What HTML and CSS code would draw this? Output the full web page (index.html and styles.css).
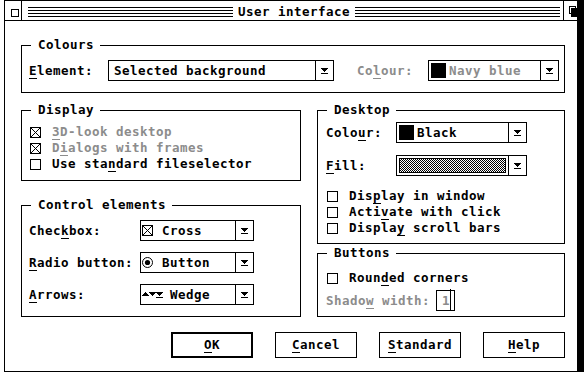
FILE: index.html
```html
<!DOCTYPE html>
<html lang="en">
<head>
<meta charset="utf-8">
<title>User interface</title>
<link rel="stylesheet" href="styles.css">
</head>
<body>
<div class="window">
  <div class="titlebar">
    <div class="closer"><span class="closer-box"></span></div>
    <div class="stripes"><span class="title">User interface</span></div>
    <div class="fuller">
      <svg width="9" height="11" viewBox="0 0 9 11" shape-rendering="crispEdges"><rect x="0.5" y="0.5" width="6" height="7" fill="#fff" stroke="#000"/><rect x="2" y="2" width="7" height="9" fill="#000"/></svg>
    </div>
  </div>

  <div class="content">
    <div class="group colours">
      <span class="legend">Colours</span>
      <div class="row">
        <span class="label w-element"><u>E</u>lement:</span>
        <div class="popup p-element">
          <span class="popup-value">Selected background</span>
          <span class="popup-arrow"><svg width="7" height="6" viewBox="0 0 7 6" shape-rendering="crispEdges"><path d="M0 0h7v1H6v1H5v1H4v1H3V3H2V2H1V1H0z"/><rect y="5" width="7" height="1"/></svg></span>
        </div>
        <span class="label w-colour disabled">Co<u>l</u>our:</span>
        <div class="popup p-small p-swatch">
          <span class="popup-value"><span class="swatch"></span><span class="disabled">Navy blue</span></span>
          <span class="popup-arrow"><svg width="7" height="6" viewBox="0 0 7 6" shape-rendering="crispEdges"><path d="M0 0h7v1H6v1H5v1H4v1H3V3H2V2H1V1H0z"/><rect y="5" width="7" height="1"/></svg></span>
        </div>
      </div>
    </div>

    <div class="columns">
      <div class="col col-left">
        <div class="group display">
          <span class="legend">Display</span>
          <div class="check">
            <svg class="cb" width="11" height="11" viewBox="0 0 11 11" shape-rendering="crispEdges"><rect x="0.5" y="0.5" width="10" height="10" fill="#fff" stroke="#000"/><path d="M1 1L10 10M10 1L1 10" stroke="#000"/></svg>
            <span class="disabled"><u>3</u>D-look desktop</span>
          </div>
          <div class="check">
            <svg class="cb" width="11" height="11" viewBox="0 0 11 11" shape-rendering="crispEdges"><rect x="0.5" y="0.5" width="10" height="10" fill="#fff" stroke="#000"/><path d="M1 1L10 10M10 1L1 10" stroke="#000"/></svg>
            <span class="disabled">D<u>i</u>alogs with frames</span>
          </div>
          <div class="check">
            <svg class="cb" width="11" height="11" viewBox="0 0 11 11" shape-rendering="crispEdges"><rect x="0.5" y="0.5" width="10" height="10" fill="#fff" stroke="#000"/></svg>
            <span>Use sta<u>n</u>dard fileselector</span>
          </div>
        </div>

        <div class="group controls">
          <span class="legend">Control elements</span>
          <div class="row">
            <span class="label w-ctrl">Chec<u>k</u>box:</span>
            <div class="popup p-ctrl">
              <span class="popup-value"><svg class="glyph" width="11" height="11" viewBox="0 0 11 11" shape-rendering="crispEdges"><rect x="0.5" y="0.5" width="10" height="10" fill="#fff" stroke="#000"/><path d="M1 1L10 10M10 1L1 10" stroke="#000"/></svg>Cross</span>
              <span class="popup-arrow"><svg width="7" height="6" viewBox="0 0 7 6" shape-rendering="crispEdges"><path d="M0 0h7v1H6v1H5v1H4v1H3V3H2V2H1V1H0z"/><rect y="5" width="7" height="1"/></svg></span>
            </div>
          </div>
          <div class="row">
            <span class="label w-ctrl"><u>R</u>adio button:</span>
            <div class="popup p-ctrl">
              <span class="popup-value"><svg class="glyph" width="11" height="11" viewBox="0 0 11 11"><circle cx="5.5" cy="5.5" r="5" fill="#fff" stroke="#000"/><circle cx="5.5" cy="5.5" r="2.6" fill="#000"/></svg>Button</span>
              <span class="popup-arrow"><svg width="7" height="6" viewBox="0 0 7 6" shape-rendering="crispEdges"><path d="M0 0h7v1H6v1H5v1H4v1H3V3H2V2H1V1H0z"/><rect y="5" width="7" height="1"/></svg></span>
            </div>
          </div>
          <div class="row">
            <span class="label w-ctrl"><u>A</u>rrows:</span>
            <div class="popup p-ctrl">
              <span class="popup-value"><svg class="glyph glyph-arrows" width="21" height="6" viewBox="0 0 21 6" shape-rendering="crispEdges"><path d="M3 0h1v1h1v1h1v1h1v1H0V3h1V2h1V1h1z"/><path d="M7 0h7v1h-1v1h-1v1h-1v1h-1V3H9V2H8V1H7z"/><path d="M14 0h7v1h-1v1h-1v1h-1v1h-1V3h-1V2h-1V1h-1z"/><rect x="14" y="5" width="7" height="1"/></svg>Wedge</span>
              <span class="popup-arrow"><svg width="7" height="6" viewBox="0 0 7 6" shape-rendering="crispEdges"><path d="M0 0h7v1H6v1H5v1H4v1H3V3H2V2H1V1H0z"/><rect y="5" width="7" height="1"/></svg></span>
            </div>
          </div>
        </div>
      </div>

      <div class="col col-right">
        <div class="group desktop">
          <span class="legend">Desktop</span>
          <div class="row">
            <span class="label w-desk">Colo<u>u</u>r:</span>
            <div class="popup p-small p-swatch">
              <span class="popup-value"><span class="swatch"></span>Black</span>
              <span class="popup-arrow"><svg width="7" height="6" viewBox="0 0 7 6" shape-rendering="crispEdges"><path d="M0 0h7v1H6v1H5v1H4v1H3V3H2V2H1V1H0z"/><rect y="5" width="7" height="1"/></svg></span>
            </div>
          </div>
          <div class="row row-gap">
            <span class="label w-desk"><u>F</u>ill:</span>
            <div class="popup p-small p-swatch">
              <span class="popup-value"><span class="pattern"></span></span>
              <span class="popup-arrow"><svg width="7" height="6" viewBox="0 0 7 6" shape-rendering="crispEdges"><path d="M0 0h7v1H6v1H5v1H4v1H3V3H2V2H1V1H0z"/><rect y="5" width="7" height="1"/></svg></span>
            </div>
          </div>
          <div class="checklist">
            <div class="check">
              <svg class="cb" width="11" height="11" viewBox="0 0 11 11" shape-rendering="crispEdges"><rect x="0.5" y="0.5" width="10" height="10" fill="#fff" stroke="#000"/></svg>
              <span>Dis<u>p</u>lay in window</span>
            </div>
            <div class="check">
              <svg class="cb" width="11" height="11" viewBox="0 0 11 11" shape-rendering="crispEdges"><rect x="0.5" y="0.5" width="10" height="10" fill="#fff" stroke="#000"/></svg>
              <span>Acti<u>v</u>ate with click</span>
            </div>
            <div class="check">
              <svg class="cb" width="11" height="11" viewBox="0 0 11 11" shape-rendering="crispEdges"><rect x="0.5" y="0.5" width="10" height="10" fill="#fff" stroke="#000"/></svg>
              <span>Displa<u>y</u> scroll bars</span>
            </div>
          </div>
        </div>

        <div class="group btngroup">
          <span class="legend">Buttons</span>
          <div class="check">
            <svg class="cb" width="11" height="11" viewBox="0 0 11 11" shape-rendering="crispEdges"><rect x="0.5" y="0.5" width="10" height="10" fill="#fff" stroke="#000"/></svg>
            <span>Roun<u>d</u>ed corners</span>
          </div>
          <div class="field-row">
            <span class="label w-shadow disabled">Shado<u>w</u> width:</span>
            <span class="field"><span class="disabled">1</span><span class="cursor"></span></span>
          </div>
        </div>
      </div>
    </div>

    <div class="actions">
      <button class="btn btn-default" type="button"><u>O</u>K</button>
      <button class="btn" type="button"><u>C</u>ancel</button>
      <button class="btn" type="button"><u>S</u>tandard</button>
      <button class="btn" type="button"><u>H</u>elp</button>
    </div>
  </div>
</div>
</body>
</html>
```

FILE: styles.css
```css
* {
  box-sizing: border-box;
}

html,
body {
  margin: 0;
  padding: 0;
  background: #fff;
}

body {
  font-family: "DejaVu Sans Mono", "Liberation Mono", monospace;
  font-weight: bold;
  font-size: 12.5px;
  letter-spacing: 0.47px;
  line-height: 16px;
  color: #000;
}

u {
  text-decoration: underline;
  text-decoration-thickness: 1px;
  text-underline-offset: 3px;
}

.disabled {
  color: #8c8c8c;
}

/* window frame */
.window {
  margin-left: 4px;
  width: 574px;
  height: 372px;
  border: 1px solid #000;
  background: #fff;
  box-shadow: 6px 0 0 #000, 1px 4px 0 #000, 6px 4px 0 #000;
  display: flex;
  flex-direction: column;
}

.titlebar {
  flex: none;
  display: flex;
  height: 20px;
  border-bottom: 1px solid #000;
}

.closer {
  flex: none;
  width: 17px;
  border-right: 1px solid #000;
}

.closer-box {
  display: block;
  width: 8px;
  height: 8px;
  margin: 8px 0 0 6px;
  border: 1px solid #000;
}

.stripes {
  flex: 1;
  height: 10px;
  margin: 6px 3px 0 6px;
  background: repeating-linear-gradient(to bottom, #000 0 1px, transparent 1px 3px);
  display: flex;
  justify-content: center;
  align-items: center;
}

.title {
  background: #fff;
  padding: 0 5px;
  line-height: 16px;
}

.fuller {
  flex: none;
  width: 14px;
  border-left: 1px solid #000;
  padding: 5px 0 0 5px;
}

.fuller svg {
  display: block;
}

/* content */
.content {
  flex: 1;
  padding: 24px 12px 0 16px;
}

.group {
  position: relative;
  border: 1px solid #000;
}

.legend {
  position: absolute;
  top: -9px;
  left: 9px;
  padding: 0 6px 0 7px;
  background: #fff;
  line-height: 16px;
}

.row {
  display: flex;
  align-items: center;
}

.row-gap {
  margin-top: 12px;
}

.label {
  flex: none;
  white-space: nowrap;
}

.w-element { width: 79px; }
.w-colour { width: 71px; margin-left: 23px; }
.w-desk { width: 70px; }
.w-ctrl { width: 111px; }
.w-shadow { width: 110px; }

.popup {
  flex: none;
  display: flex;
  height: 21px;
  border: 1px solid #000;
  background: #fff;
}

.popup-value {
  flex: 1;
  display: flex;
  align-items: center;
  padding-left: 5px;
  white-space: nowrap;
  overflow: hidden;
}

.popup-arrow {
  flex: none;
  width: 18px;
  border-left: 1px solid #000;
  display: flex;
  align-items: center;
  justify-content: center;
}

.popup-arrow svg {
  display: block;
}

.p-element { width: 226px; }
.p-small { width: 131px; }
.p-ctrl { width: 114px; }

.p-swatch .popup-value {
  padding-left: 2px;
}

.p-ctrl .popup-value {
  padding-left: 1px;
}

.swatch {
  flex: none;
  width: 15px;
  height: 15px;
  margin-right: 3px;
  background: #000;
}

.pattern {
  flex: none;
  width: 107px;
  height: 15px;
  border: 1px solid #000;
  background: repeating-conic-gradient(#000 0 25%, #fff 0 50%) 0 0 / 2px 2px;
}

.glyph {
  flex: none;
  display: block;
  margin-right: 9px;
}

.glyph-arrows {
  margin-right: 7px;
}

/* groups */
.colours {
  height: 48px;
  padding: 14px 0 0 7px;
}

.columns {
  display: flex;
  gap: 16px;
  margin-top: 17px;
}

.col {
  display: flex;
  flex-direction: column;
}

.col-left {
  width: 280px;
  gap: 24px;
}

.col-right {
  width: 248px;
  gap: 9px;
}

.display {
  height: 71px;
  padding: 13px 0 0 7px;
}

.controls {
  height: 112px;
  padding: 14px 0 0 7px;
  display: flex;
  flex-direction: column;
  gap: 11px;
}

.desktop {
  height: 134px;
  padding: 11px 0 0 8px;
}

.checklist {
  margin-top: 12px;
}

.btngroup {
  height: 64px;
  padding: 16px 0 0 8px;
}

.check {
  display: flex;
  align-items: center;
  height: 16px;
  white-space: nowrap;
}

.cb {
  flex: none;
  display: block;
  margin: 0 11px 0 1px;
}

.field-row {
  display: flex;
  align-items: center;
  height: 21px;
  margin-top: 4px;
}

.field {
  position: relative;
  flex: none;
  width: 19px;
  height: 21px;
  border: 1px solid #000;
  padding-left: 5px;
  line-height: 19px;
}

.cursor {
  position: absolute;
  left: 13px;
  top: -2px;
  width: 1px;
  height: 22px;
  background: #000;
}

/* dialog buttons */
.actions {
  display: flex;
  justify-content: flex-end;
  gap: 22px;
  margin-top: 15px;
}

.btn {
  width: 82px;
  height: 26px;
  padding: 0;
  border: 1px solid #000;
  border-radius: 0;
  background: #fff;
  color: #000;
  font: inherit;
  letter-spacing: inherit;
  display: flex;
  align-items: center;
  justify-content: center;
}

.btn-default {
  border-width: 2px;
}
```
